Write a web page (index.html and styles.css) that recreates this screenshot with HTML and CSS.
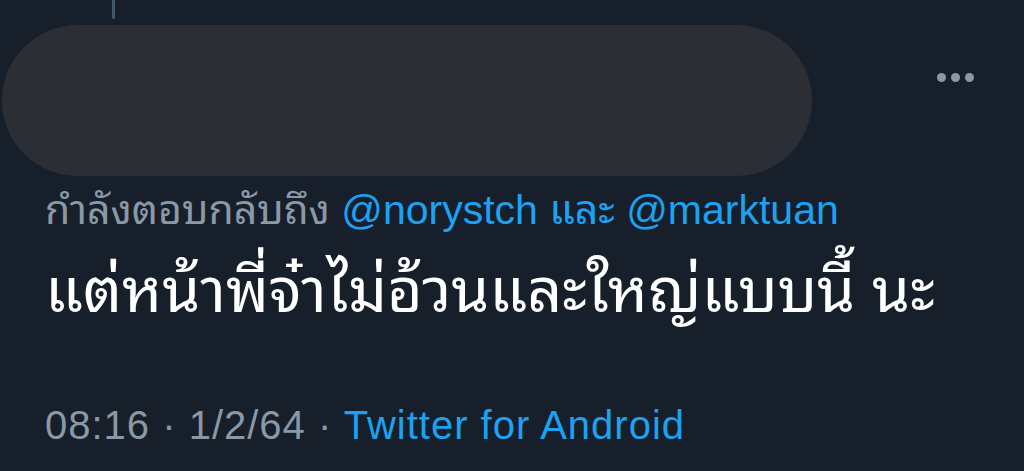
FILE: index.html
```html
<!DOCTYPE html>
<html lang="th">
<head>
<meta charset="utf-8">
<link rel="stylesheet" href="styles.css">
</head>
<body>
<main class="tweet">
  <div class="thread-line"></div>
  <div class="head">
    <div class="redacted"></div>
    <div class="more"><span></span><span></span><span></span></div>
  </div>
  <p class="reply">กำลังตอบกลับถึง <span class="link">@norystch และ @marktuan</span></p>
  <p class="text">แต่หน้าพี่จ๋าไม่อ้วนและใหญ่แบบนี้ นะ</p>
  <p class="meta">08:16 · 1/2/64 · <span class="link">Twitter for Android</span></p>
</main>
</body>
</html>
```
FILE: styles.css
```css
html, body {
  margin: 0;
  background: #161f2a;
}
body {
  width: 1024px;
  height: 471px;
  overflow: hidden;
  font-family: "Liberation Sans", "Noto Sans Thai Looped", "Loma", "Noto Sans Thai", sans-serif;
}
.tweet {
  display: flex;
  flex-direction: column;
}
.thread-line {
  width: 3px;
  height: 19px;
  margin-left: 112px;
  background: #44566b;
  border-radius: 0 0 2px 2px;
}
.head {
  display: flex;
  align-items: flex-start;
  margin-top: 6px;
}
.redacted {
  width: 810px;
  height: 151px;
  margin-left: 2px;
  border-radius: 76px;
  background: #2b2f35;
}
.more {
  display: flex;
  gap: 5px;
  margin-left: 125px;
  margin-top: 48px;
}
.more span {
  width: 9px;
  height: 9px;
  border-radius: 50%;
  background: #8b98a5;
}
p { margin: 0; padding-left: 45px; white-space: nowrap; }
.reply {
  font-size: 41px;
  line-height: 48px;
  margin-top: 10px;
  color: #8b98a5;
}
.link { color: #1da1f2; }
.text {
  font-size: 61px;
  line-height: 70px;
  margin-top: 22px;
  color: #ffffff;
}
.meta {
  font-size: 40px;
  line-height: 48px;
  margin-top: 75px;
  letter-spacing: 1px;
  color: #8b98a5;
}
```
